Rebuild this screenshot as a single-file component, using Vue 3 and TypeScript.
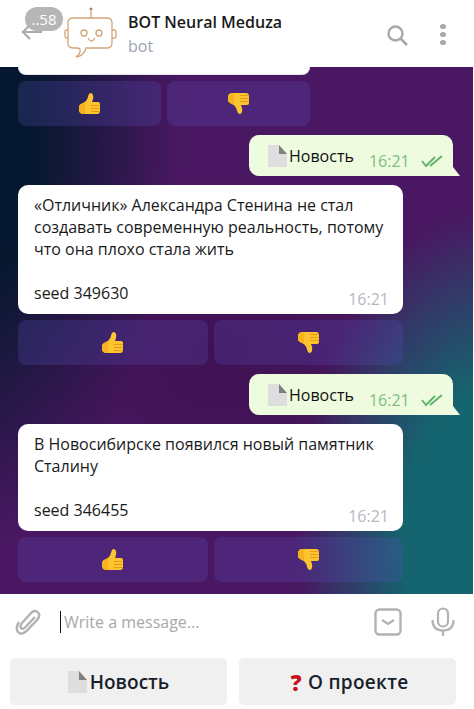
<template>
  <div class="app">
    <header class="top-bar">
      <div class="back">
        <svg class="back-arrow" viewBox="0 0 24 24" width="24" height="24">
          <path d="M22 12H3M10 5l-7 7 7 7" fill="none" stroke="#ababab" stroke-width="2.200" />
        </svg>
        <span class="unread">..58</span>
      </div>
      <svg class="avatar" viewBox="0 0 54 54" width="54" height="54">
        <g fill="none" stroke="#d2a679" stroke-width="1.300">
          <path d="M22 42H43Q48 42 48 37V17Q48 12 43 12H9Q4 12 4 17V37Q4 42 9 42H13Q17 42 16 46Q15.500 49 12 51Q20 50 22 42Z" />
          <path d="M4 24H2.500Q1 24 1 26V30Q1 32 2.500 32H4M48 24H50Q52 24 52 26V30Q52 32 50 32H48" />
          <path d="M27 12V5" />
          <circle cx="20" cy="27" r="3" />
          <circle cx="35" cy="27" r="3" />
          <path d="M24 32Q27.500 38 31 32" />
        </g>
        <circle cx="27" cy="3" r="1.600" fill="#a88a68" />
      </svg>
      <div class="title-block">
        <div class="title">BOT Neural Meduza</div>
        <div class="subtitle">bot</div>
      </div>
      <svg class="search" viewBox="0 0 24 24" width="24" height="24">
        <circle cx="10.500" cy="10.500" r="7" fill="none" stroke="#a8a8a8" stroke-width="2.400" />
        <path d="M15.500 15.500L22 22" stroke="#a8a8a8" stroke-width="2.600" />
      </svg>
      <div class="dots"><i></i><i></i><i></i></div>
    </header>

    <main class="chat">
      <div class="bubble-stub"></div>
      <div class="keys small">
        <button v-for="k in thumbs" :key="k" class="key">
          <svg class="thumb" :class="{ down: k === 'down' }" viewBox="0 0 21 21" width="21" height="21">
            <path :d="thumbPath" fill="#fdc42f" />
            <path d="M0 14Q0 12 2 11L6 9V21H5Q0 21 0 17Z" fill="#f7b21f" />
            <path d="M12 12.500H20.500M12 15.500H20.500M12 18.500H20.500" stroke="#e59b12" stroke-width="1" />
          </svg>
        </button>
      </div>

      <div class="out">
        <svg class="page" viewBox="0 0 19 22" width="19" height="22">
          <path d="M0 0H11L19 9V22H0Z" fill="#dedede" />
          <path d="M11 0L19 9H11Z" fill="#808080" />
        </svg>
        <span class="out-text">Новость</span>
        <span class="out-time">16:21</span>
        <svg class="ticks" viewBox="0 0 24 14" width="24" height="14">
          <path d="M1 7l4 5L14 3M9 12L21 2" fill="none" stroke="#5fb36a" stroke-width="1.900" />
        </svg>
        <span class="tail"></span>
      </div>

      <div class="msg">
        <p class="msg-text">«Отличник» Александра Стенина не стал создавать современную реальность, потому что она плохо стала жить</p>
        <p class="msg-seed">seed 349630</p>
        <span class="msg-time">16:21</span>
      </div>
      <div class="keys">
        <button v-for="k in thumbs" :key="k" class="key">
          <svg class="thumb" :class="{ down: k === 'down' }" viewBox="0 0 21 21" width="21" height="21">
            <path :d="thumbPath" fill="#fdc42f" />
            <path d="M0 14Q0 12 2 11L6 9V21H5Q0 21 0 17Z" fill="#f7b21f" />
            <path d="M12 12.500H20.500M12 15.500H20.500M12 18.500H20.500" stroke="#e59b12" stroke-width="1" />
          </svg>
        </button>
      </div>

      <div class="out">
        <svg class="page" viewBox="0 0 19 22" width="19" height="22">
          <path d="M0 0H11L19 9V22H0Z" fill="#dedede" />
          <path d="M11 0L19 9H11Z" fill="#808080" />
        </svg>
        <span class="out-text">Новость</span>
        <span class="out-time">16:21</span>
        <svg class="ticks" viewBox="0 0 24 14" width="24" height="14">
          <path d="M1 7l4 5L14 3M9 12L21 2" fill="none" stroke="#5fb36a" stroke-width="1.900" />
        </svg>
        <span class="tail"></span>
      </div>

      <div class="msg short">
        <p class="msg-text">В Новосибирске появился новый памятник Сталину</p>
        <p class="msg-seed">seed 346455</p>
        <span class="msg-time">16:21</span>
      </div>
      <div class="keys">
        <button v-for="k in thumbs" :key="k" class="key">
          <svg class="thumb" :class="{ down: k === 'down' }" viewBox="0 0 21 21" width="21" height="21">
            <path :d="thumbPath" fill="#fdc42f" />
            <path d="M0 14Q0 12 2 11L6 9V21H5Q0 21 0 17Z" fill="#f7b21f" />
            <path d="M12 12.500H20.500M12 15.500H20.500M12 18.500H20.500" stroke="#e59b12" stroke-width="1" />
          </svg>
        </button>
      </div>
    </main>

    <footer class="composer">
      <div class="input-row">
        <svg class="clip" viewBox="0 0 26 28" width="26" height="28">
          <path d="M20 9L10 19.500Q7.500 22 6 20T7 15L16 5Q20 1.500 23 4.500T22 12L11 23.500Q6 27.500 3 24T4 14" fill="none" stroke="#b2b2b2" stroke-width="2.400" />
        </svg>
        <span class="caret"></span>
        <span class="placeholder">Write a message...</span>
        <svg class="sticker" viewBox="0 0 28 28" width="28" height="28">
          <rect x="1.500" y="1.500" width="25" height="25" rx="4" fill="none" stroke="#b2b2b2" stroke-width="2.400" />
          <path d="M8 12l6 4 6-4" fill="none" stroke="#b2b2b2" stroke-width="2.200" />
        </svg>
        <svg class="mic" viewBox="0 0 24 30" width="24" height="30">
          <rect x="7" y="1.500" width="10" height="18" rx="5" fill="none" stroke="#b2b2b2" stroke-width="2.200" />
          <path d="M1.500 13Q1.500 23.500 12 23.500T22.500 13M12 23.500V29" fill="none" stroke="#b2b2b2" stroke-width="2.200" />
        </svg>
      </div>
      <div class="reply-keys">
        <button class="reply">
          <svg class="page" viewBox="0 0 19 22" width="19" height="22">
            <path d="M0 0H11L19 9V22H0Z" fill="#dedede" />
            <path d="M11 0L19 9H11Z" fill="#808080" />
          </svg>
          <span>Новость</span>
        </button>
        <button class="reply project">
          <span class="q">?</span>
          <span>О проекте</span>
        </button>
      </div>
    </footer>
  </div>
</template>

<script setup lang="ts">
const thumbs = ['up', 'down'] as const
const thumbPath =
  'M0 14Q0 12 2 11L6 9Q9 6 9.500 2Q10 0 12 0Q15 1 14 6L13 9H19Q21 9 21 11V18Q21 21 18 21H5Q0 21 0 17Z'
</script>

<style>
html,
body {
  margin: 0;
  background: #fff;
}
</style>

<style scoped>
.app {
  width: 474px;
  height: 709px;
  display: flex;
  flex-direction: column;
  overflow: hidden;
  font-family: 'Open Sans', 'Liberation Sans', sans-serif;
  color: #1a1a1a;
}

.top-bar {
  height: 67px;
  flex: none;
  display: flex;
  align-items: center;
  background: #fff;
  box-sizing: border-box;
  padding-left: 20px;
}

.back {
  position: relative;
  width: 44px;
  height: 67px;
  flex: none;
}

.back-arrow {
  position: absolute;
  left: 0;
  top: 20px;
}

.unread {
  position: absolute;
  left: 5px;
  top: 7px;
  width: 38px;
  height: 24px;
  border-radius: 12px;
  background: #b6b6b6;
  color: #fff;
  font-size: 15px;
  line-height: 24px;
  text-align: center;
}

.avatar {
  flex: none;
  align-self: flex-start;
  margin-top: 6px;
}

.title-block {
  margin-left: 10px;
  flex: 1;
  margin-top: 3px;
}

.title {
  font-size: 16px;
  font-weight: 600;
  line-height: 22px;
}

.subtitle {
  font-size: 16px;
  line-height: 26px;
  color: #9aa5b1;
}

.search {
  margin-right: 31px;
  margin-top: 2px;
}

.dots {
  width: 6px;
  display: flex;
  flex-direction: column;
  gap: 3px;
  margin-right: 28px;
  margin-top: 1px;
}

.dots i {
  width: 6px;
  height: 5px;
  border-radius: 50%;
  background: #a8a8a8;
}

.chat {
  height: 527px;
  width: 473px;
  flex: none;
  box-sizing: border-box;
  padding: 0 18px;
  overflow: hidden;
  background:
    radial-gradient(ellipse 200px 330px at 495px 470px, #14656f 45%, rgba(20, 101, 111, 0) 100%),
    radial-gradient(ellipse 240px 420px at -60px 70px, #06182f 40%, rgba(6, 24, 47, 0) 100%),
    radial-gradient(ellipse 200px 180px at 220px 290px, #3f1152 0%, rgba(63, 17, 82, 0) 100%),
    #4a1762;
}

.bubble-stub {
  width: 292px;
  height: 8px;
  background: #fff;
  border-bottom: 1px solid #e4e4e4;
  border-radius: 0 0 8px 8px;
  box-sizing: border-box;
}

.keys {
  display: flex;
  gap: 6px;
  width: 385px;
  height: 45px;
  margin-top: 6px;
}

.keys.small {
  width: 292px;
}

.key {
  flex: 1;
  border: 0;
  padding: 0;
  border-radius: 8px;
  background: rgba(90, 80, 190, 0.26);
  display: flex;
  align-items: center;
  justify-content: center;
}

.thumb.down {
  transform: scaleY(-1);
}

.out {
  position: relative;
  width: 204px;
  height: 41px;
  margin: 9px 0 0 231px;
  box-sizing: border-box;
  background: #eefbdf;
  border-radius: 10px 10px 0 10px;
  display: flex;
  align-items: center;
  padding-left: 19px;
}

.page {
  flex: none;
}

.out-text {
  font-size: 16px;
  margin-left: 2px;
  color: #111;
}

.out-time {
  font-size: 16px;
  color: #7fbd7f;
  margin-left: 15px;
  margin-top: 11px;
}

.ticks {
  margin-left: 11px;
  margin-top: 11px;
}

.tail {
  position: absolute;
  right: -7px;
  bottom: 0;
  width: 0;
  height: 0;
  border-left: 7px solid #eefbdf;
  border-top: 9px solid transparent;
}

.msg {
  position: relative;
  width: 385px;
  height: 129px;
  margin-top: 9px;
  box-sizing: border-box;
  background: #fff;
  border-radius: 10px;
  padding: 9px 16px 0;
  font-size: 16px;
  line-height: 22px;
}

.msg.short {
  height: 107px;
}

.msg p {
  margin: 0;
}

.msg .msg-seed {
  margin-top: 22px;
}

.msg-time {
  position: absolute;
  right: 14px;
  bottom: 4px;
  font-size: 16px;
  color: #b4b9bf;
}

.composer {
  flex: 1;
  background: #fff;
  min-height: 0;
}

.input-row {
  height: 56px;
  display: flex;
  align-items: center;
  padding-left: 15px;
}

.clip {
  flex: none;
}

.caret {
  width: 1px;
  height: 22px;
  background: #111;
  margin-left: 19px;
}

.placeholder {
  flex: 1;
  font-size: 16px;
  color: #a8a8a8;
  margin-left: 3px;
}

.sticker {
  margin-right: 29px;
}

.mic {
  margin-right: 19px;
}

.reply-keys {
  display: flex;
  gap: 12px;
  padding: 8px 18px 0 10px;
}

.reply {
  flex: 1;
  height: 47px;
  border: 0;
  border-radius: 5px;
  background: #f0f0f0;
  font: 600 19px 'Open Sans', 'Liberation Sans', sans-serif;
  color: #17212b;
  display: flex;
  align-items: center;
  justify-content: center;
  gap: 3px;
}

.reply.project {
  gap: 6px;
  letter-spacing: 0.3px;
}

.q {
  color: #c8101a;
  font-weight: 800;
  font-size: 22px;
  margin-left: 4px;
}
</style>
